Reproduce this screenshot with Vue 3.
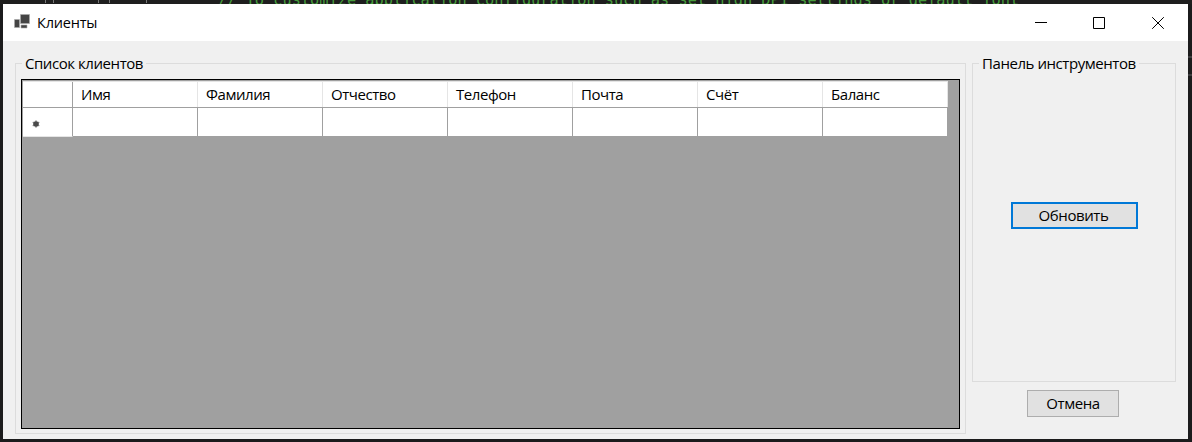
<script setup>
const columns = ['Имя', 'Фамилия', 'Отчество', 'Телефон', 'Почта', 'Счёт', 'Баланс']
const guides = [45, 53, 98, 109, 146]
</script>

<template>
  <div class="desktop">
    <div class="editor">
      <i v-for="g in guides" :key="g" class="guide" :style="{ left: g + 'px' }"></i>
      <span class="code">// To customize application configuration such as set high DPI settings or default font</span>
    </div>
    <i class="edge edge-a"></i>
    <i class="edge edge-b"></i>
    <main class="window">
      <header class="titlebar">
        <svg class="app-icon" width="17" height="16" viewBox="0 0 17 16">
          <path d="M6.5 0.5h9v9h-9z M0.5 5.5h5v8h-5z M7 11h6v3H7z" fill="#444" stroke="#aaa" stroke-width=".6" />
        </svg>
        <span class="title">Клиенты</span>
        <svg class="controls" width="130" height="14" viewBox="0 0 130 14" fill="none" stroke="#000">
          <path d="M0 6.5h12" />
          <path d="M58.5 1.5h11v11h-11z" />
          <path d="M117.2 1.2l11.6 11.6M128.8 1.2l-11.6 11.6" />
        </svg>
      </header>
      <div class="body">
        <section class="group clients">
          <h2 class="legend">Список клиентов</h2>
          <div class="grid">
            <div class="row head">
              <div class="cell corner"></div>
              <div v-for="c in columns" :key="c" class="cell">{{ c }}</div>
            </div>
            <div class="row blank">
              <div class="cell corner">
                <svg width="8" height="8" viewBox="0 0 8 8">
                  <path d="M4 .2v7.6M.7 2.1l6.6 3.8M7.3 2.1L.7 5.9" stroke="#999" stroke-width="1.3" />
                  <circle cx="4" cy="4" r="2.8" fill="#4a4a4a" />
                </svg>
              </div>
              <div v-for="c in columns" :key="c" class="cell"></div>
            </div>
          </div>
        </section>
        <aside class="side">
          <section class="group tools">
            <h2 class="legend">Панель инструментов</h2>
            <button class="btn refresh">Обновить</button>
          </section>
          <button class="btn cancel">Отмена</button>
        </aside>
      </div>
    </main>
  </div>
</template>

<style>
body { margin: 0; overflow: hidden; }
</style>

<style scoped>
* { box-sizing: border-box; }
.desktop {
  position: relative;
  width: 1192px;
  height: 442px;
  padding: 4px 4px 3px 3px;
  background: #1b1b1c;
  overflow: hidden;
  font-family: "Open Sans", "Noto Sans", sans-serif;
  font-size: 15px;
  letter-spacing: -0.44px;
  color: #000;
}
.editor { position: absolute; left: 0; top: 0; width: 1192px; height: 4px; overflow: hidden; background: #1e1e1e; }
.code {
  position: absolute;
  left: 218px;
  top: -9px;
  font: 15.3px/18px "DejaVu Sans Mono", monospace;
  letter-spacing: 0;
  color: #469b3c;
  white-space: pre;
}
.guide { position: absolute; top: 0; width: 1px; height: 3px; background: #777; }
.edge { position: absolute; left: 1188px; width: 4px; height: 2px; background: #3c3c3e; }
.edge-a { top: 56px; }
.edge-b { top: 74px; }
.window { position: relative; width: 1185px; height: 435px; background: #f0f0f0; }
.titlebar { display: flex; align-items: center; height: 37px; padding: 0 23px 0 11px; background: #fff; }
.app-icon { margin-top: -2px; }
.title { margin: 0 0 0 6px; font-size: 14.5px; line-height: 20px; letter-spacing: -0.2px; }
.controls { margin-left: auto; }
.body { display: flex; gap: 6px; height: 398px; padding: 22px 12px 5px 12px; }
.group { border: 1px solid #dcdcdc; }
.legend {
  width: max-content;
  margin: -12px 0 0 6px;
  padding: 0 3px;
  background: #f0f0f0;
  font-size: 15px;
  font-weight: 400;
  line-height: 22px;
  white-space: nowrap;
}
.clients { width: 951px; height: 371px; }
.grid {
  width: 939px;
  height: 350px;
  margin: 5px 0 0 5px;
  padding: 1px;
  border: 1px solid #000;
  background: #a0a0a0;
}
.row { display: flex; width: 925px; }
.head { height: 27px; background: #fff; border-bottom: 1px solid #a0a0a0; border-top: 1px solid #e5e5e5; }
.blank { height: 28px; }
.cell {
  width: 125px;
  padding-left: 8px;
  background: #fff;
  border-right: 1px solid #a0a0a0;
  line-height: 25px;
}
.head .cell { border-right-color: #e5e5e5; }
.cell.corner { width: 50px; flex: none; }
.head .corner { border-right-color: #a0a0a0; }
.blank .corner { display: flex; align-items: center; height: 29px; border-bottom: 1px solid #e5e5e5; padding: 4px 0 0 9px; }
.side { display: flex; flex-direction: column; align-items: center; width: 204px; }
.tools { width: 204px; height: 319px; }
.btn {
  display: flex;
  align-items: center;
  justify-content: center;
  height: 27px;
  padding: 0 0 2px;
  border: 1px solid #adadad;
  border-radius: 0;
  background: #e1e1e1;
  font: 15px/20px "Open Sans", "Noto Sans", sans-serif;
  letter-spacing: -0.4px;
  color: #000;
}
.refresh { width: 127px; margin: 128px 0 0 38px; padding-right: 2px; border: 2px solid #0078d7; }
.cancel { width: 92px; margin: 8px 2px 0 0; }
</style>
